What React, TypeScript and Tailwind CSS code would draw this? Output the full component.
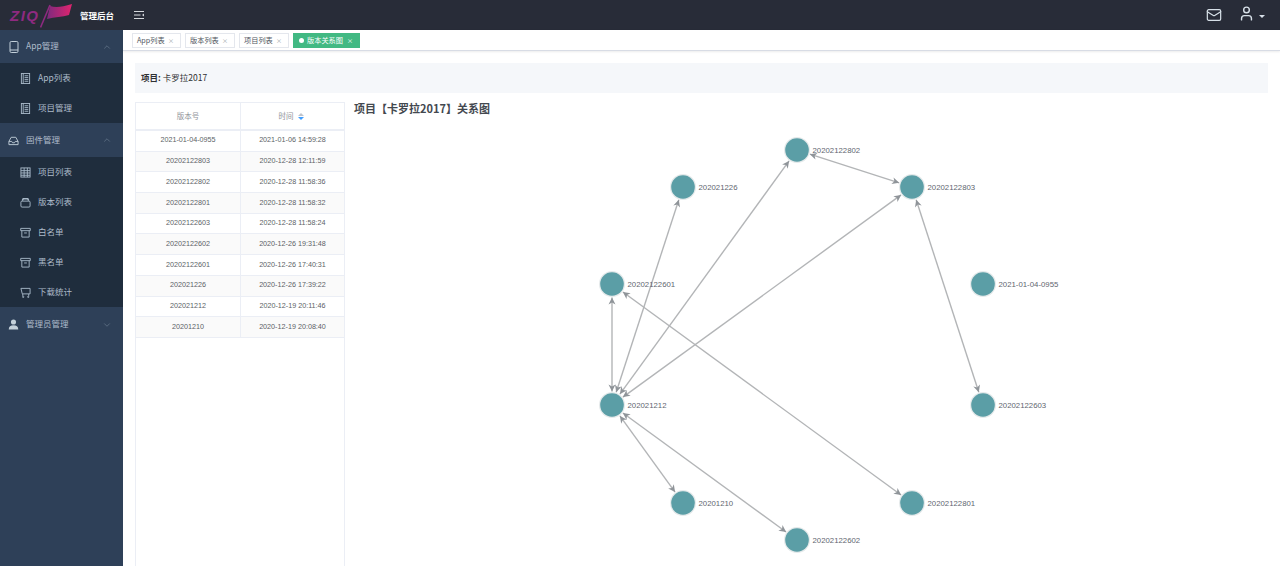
import React from 'react';
import { ChevronDown, ChevronUp, Mail, User } from 'lucide-react';

const cjk = { fontFamily: '"Noto Sans CJK SC", "Liberation Sans", sans-serif' };

const rows = [
  ['2021-01-04-0955', '2021-01-06 14:59:28'],
  ['20202122803', '2020-12-28 12:11:59'],
  ['20202122802', '2020-12-28 11:58:36'],
  ['20202122801', '2020-12-28 11:58:32'],
  ['20202122603', '2020-12-28 11:58:24'],
  ['20202122602', '2020-12-26 19:31:48'],
  ['20202122601', '2020-12-26 17:40:31'],
  ['202021226', '2020-12-26 17:39:22'],
  ['202021212', '2020-12-19 20:11:46'],
  ['20201210', '2020-12-19 20:08:40'],
];

// node positions in page coordinates, the svg starts at (345, 125)
const nodes: Record<string, [number, number]> = {
  '20202122802': [797, 150],
  '202021226': [683, 187],
  '20202122803': [912, 187],
  '20202122601': [612, 284],
  '2021-01-04-0955': [983, 284],
  '202021212': [612, 405],
  '20202122603': [983, 405],
  '20201210': [683, 503],
  '20202122801': [912, 503],
  '20202122602': [797, 540],
};

const edges: [string, string][] = [
  ['202021212', '20202122601'],
  ['202021212', '202021226'],
  ['202021212', '20202122802'],
  ['202021212', '20202122803'],
  ['20202122601', '20202122801'],
  ['20201210', '202021212'],
  ['20202122602', '202021212'],
  ['20202122802', '20202122803'],
  ['20202122803', '20202122603'],
];

const Arrow = ({ x, y, angle }: { x: number; y: number; angle: number }) => (
  <path
    d="M-7 -3.5 L0 0 L-7 3.5 L-5 0 Z"
    fill="#8f9499"
    transform={`translate(${x} ${y}) rotate(${angle})`}
  />
);

const Graph = () => (
  <svg className="absolute left-0 top-0" width="935" height="441" viewBox="345 125 935 441">
    {edges.map(([a, b]) => {
      const [x1, y1] = nodes[a];
      const [x2, y2] = nodes[b];
      const len = Math.hypot(x2 - x1, y2 - y1);
      const ux = (x2 - x1) / len;
      const uy = (y2 - y1) / len;
      const r = 13.5;
      const angle = (Math.atan2(uy, ux) * 180) / Math.PI;
      return (
        <g key={a + b}>
          <line x1={x1 + ux * r} y1={y1 + uy * r} x2={x2 - ux * r} y2={y2 - uy * r} stroke="#b3b5b7" strokeWidth="1.4" />
          <Arrow x={x2 - ux * r} y={y2 - uy * r} angle={angle} />
          <Arrow x={x1 + ux * r} y={y1 + uy * r} angle={angle + 180} />
        </g>
      );
    })}
    {Object.entries(nodes).map(([name, [x, y]]) => (
      <g key={name}>
        <circle cx={x} cy={y} r="13" fill="#e4e9ea" />
        <circle cx={x} cy={y} r="11.8" fill="#5b9ea6" />
        <text x={x + 15.5} y={y + 2.7} fontSize="7.8" fill="#5f6670" fontFamily="Liberation Sans, sans-serif">
          {name}
        </text>
      </g>
    ))}
  </svg>
);

// small sidebar glyphs, the icon packages have nothing this close
const Ic = ({ size = 11, children }: { size?: number; children: React.ReactNode }) => (
  <svg width={size} height={size} viewBox="0 0 12 12" fill="none" stroke="currentColor" strokeWidth="1">
    {children}
  </svg>
);

const PhoneIcon = () => (
  <Ic size={12}>
    <rect x="2" y="0.5" width="8" height="11" rx="1.2" />
    <path d="M2 9h8" />
  </Ic>
);
const BookIcon = () => (
  <Ic>
    <rect x="1.5" y="0.5" width="9" height="11" />
    <path d="M3.5 0.5v11M5 3h4M5 5h4M5 7h4M5 9h4" />
  </Ic>
);
const GridIcon = () => (
  <Ic>
    <rect x="1" y="1" width="10" height="10" />
    <path d="M1 4h10M1 6.5h10M1 9h10M4.5 1v10M8 1v10" />
  </Ic>
);
const BoxIcon = () => (
  <Ic>
    <rect x="1" y="4.5" width="10" height="6.5" rx="1.2" />
    <path d="M2.5 4L3.5 2h5l1 2" strokeWidth="1.6" />
  </Ic>
);
const ArchiveIcon = () => (
  <Ic>
    <path d="M0.8 1.5h10.4M0.8 4h10.4" />
    <path d="M0.8 1.5v2.5M11.2 1.5v2.5M2 4v7h8V4M4.5 6.5h3" />
  </Ic>
);
const CartIcon = () => (
  <Ic>
    <path d="M1 1.5h10v6H2.5zM3 7.5v2.2M9.5 7.5v2.2" />
    <circle cx="3.5" cy="10.8" r="0.7" />
    <circle cx="9" cy="10.8" r="0.7" />
  </Ic>
);
const FirmwareIcon = () => (
  <Ic size={11}>
    <path d="M1 7l2.5-4.5h5L11 7v3.5H1zM1 7h3l1 1.5h2L8 7h3" />
  </Ic>
);
const AdminIcon = () => (
  <svg width="11" height="11" viewBox="0 0 12 12" fill="currentColor">
    <circle cx="6" cy="3.3" r="2.8" />
    <path d="M0.8 11.5c0-3.2 2-4.6 5.2-4.6s5.2 1.4 5.2 4.6z" />
  </svg>
);

const MenuHead = ({ icon, label, open, h }: { icon: React.ReactNode; label: string; open: boolean; h: string }) => (
  <div className={`flex items-center pl-[8px] pr-[11px] text-[8.5px] text-[#aebccb] ${h}`}>
    <span className="flex w-[18px] text-[#c3d0da]">{icon}</span>
    <span className="-mt-[2px]">{label}</span>
    <span className="ml-auto text-[#5f7186]">
      {open ? <ChevronUp size={10} /> : <ChevronDown size={10} />}
    </span>
  </div>
);

const MenuItem = ({ icon, label }: { icon: React.ReactNode; label: string }) => (
  <div className="flex h-[30px] items-center pl-[20px] text-[8.5px] text-[#aebccb]">
    <span className="flex w-[18px] text-[#a9bac9]">{icon}</span>
    <span className="-mt-[2px]">{label}</span>
  </div>
);

const Tab = ({ label, w }: { label: string; w: string }) => (
  <div className={`flex h-[15px] items-center justify-between whitespace-nowrap border border-[#e4e7ed] bg-white pl-[4px] pr-[6px] text-[7.2px] text-[#50565e] ${w}`}>
    <span>{label}</span>
    <span className="text-[6px] text-[#9aa0a6]">×</span>
  </div>
);

export default function App() {
  return (
    <div className="flex h-[566px] w-[1280px] flex-col overflow-hidden bg-white" style={cjk}>
      {/* Top bar */}
      <header className="flex h-[30px] shrink-0 items-center bg-[#282c38]">
        <div className="flex w-[123px] items-center pl-[10px]">
          <span
            className="w-[31px] whitespace-nowrap text-[15px] font-bold italic leading-none tracking-[1.5px] text-[#8e2a80]"
            style={{ fontFamily: '"Liberation Sans", sans-serif' }}
          >
            ZIQ
          </span>
          <svg width="32" height="24" viewBox="0 0 32 24" className="-ml-[1px] mt-[2px] shrink-0">
            <defs>
              <linearGradient id="flag" x1="0" x2="1">
                <stop offset="0" stopColor="#7d2a7e" />
                <stop offset="1" stopColor="#e0246e" />
              </linearGradient>
            </defs>
            <path d="M0.5 23.5 L10 1" stroke="#8e2a80" strokeWidth="1.6" />
            <path d="M10 2 C16 4 22 3 32 0 L29 11 C22 13 15 13 7 15 Z" fill="url(#flag)" />
          </svg>
          <span className="ml-[8px] whitespace-nowrap text-[8.5px] font-bold text-white">管理后台</span>
        </div>
        <svg width="10" height="10" viewBox="0 0 10 10" className="ml-[11px] text-[#d5d8dc]" fill="none" stroke="currentColor" strokeWidth="1">
          <path d="M0 1.5h10M0 5h6.5M0 8.5h10" />
          <path d="M10 3.6v2.8L8 5z" fill="currentColor" stroke="none" />
        </svg>
        <div className="ml-auto flex items-center pr-[15px] text-[#d7e0e8]">
          <Mail size={16} strokeWidth={1.8} />
          <User size={17} className="ml-[16px] -mt-[4px]" />
          <span className="ml-[4px] mt-[2px] h-0 w-0 border-x-[3px] border-t-[3px] border-x-transparent border-t-[#d7e0e8]" />
        </div>
      </header>

      <div className="flex min-h-0 flex-1">
        {/* Sidebar */}
        <aside className="w-[123px] shrink-0 bg-[#2e4058]">
          <MenuHead icon={<PhoneIcon />} label="App管理" open h="h-[33px]" />
          <div className="bg-[#1f2d3d]">
            <MenuItem icon={<BookIcon />} label="App列表" />
            <MenuItem icon={<BookIcon />} label="项目管理" />
          </div>
          <MenuHead icon={<FirmwareIcon />} label="固件管理" open h="h-[34px]" />
          <div className="bg-[#1f2d3d]">
            <MenuItem icon={<GridIcon />} label="项目列表" />
            <MenuItem icon={<BoxIcon />} label="版本列表" />
            <MenuItem icon={<ArchiveIcon />} label="白名单" />
            <MenuItem icon={<ArchiveIcon />} label="黑名单" />
            <MenuItem icon={<CartIcon />} label="下载统计" />
          </div>
          <MenuHead icon={<AdminIcon />} label="管理员管理" open={false} h="h-[35px]" />
        </aside>

        {/* Main */}
        <main className="flex min-w-0 flex-1 flex-col">
          <div className="flex h-[21px] shrink-0 items-center gap-[4px] border-b border-[#d8dce5] pl-[9px] shadow-[0_1px_2px_rgba(0,0,0,0.08)]">
            <Tab label="App列表" w="w-[49px]" />
            <Tab label="版本列表" w="w-[50px]" />
            <Tab label="项目列表" w="w-[50px]" />
            <div className="flex h-[15px] w-[67px] items-center whitespace-nowrap bg-[#42b983] pl-[6px] text-[7.2px] text-white">
              <span className="mr-[3px] h-[5px] w-[5px] rounded-full bg-white" />
              <span>版本关系图</span>
              <span className="ml-[4px] text-[6px]">×</span>
            </div>
          </div>

          <div className="flex min-h-0 flex-1 flex-col px-[12px] pt-[12px]">
            <div className="flex h-[30px] shrink-0 items-center bg-[#f5f7fa] pb-[2px] pl-[6px] text-[8.5px] text-[#303133]">
              <span className="font-bold">项目:</span>
              <span className="ml-[2px]">卡罗拉2017</span>
            </div>

            <div className="mt-[9px] flex min-h-0 flex-1">
              {/* Version table */}
              <div className="w-[210px] shrink-0 border-x border-t border-[#ebeef5] text-[7.2px] text-[#5c5f66]">
                <div className="flex h-[28px] border-b-2 border-[#ebeef5] text-[7.5px] text-[#909399]">
                  <div className="flex w-[105px] items-center justify-center border-r border-[#ebeef5]">版本号</div>
                  <div className="flex flex-1 items-center justify-center pr-[3px]">
                    时间
                    <span className="ml-[4px] flex flex-col gap-[1px]">
                      <span className="h-0 w-0 border-x-[3px] border-b-[3px] border-x-transparent border-b-[#c0c4cc]" />
                      <span className="h-0 w-0 border-x-[3px] border-t-[3px] border-x-transparent border-t-[#409eff]" />
                    </span>
                  </div>
                </div>
                {rows.map(([version, time], i) => (
                  <div
                    key={version}
                    className={`flex h-[20.7px] border-b border-[#ebeef5] ${i % 2 === 1 ? 'bg-[#fafafa]' : 'bg-white'}`}
                    style={{ fontFamily: '"Liberation Sans", sans-serif' }}
                  >
                    <div className="flex w-[105px] items-center justify-center border-r border-[#ebeef5]">{version}</div>
                    <div className="flex flex-1 items-center justify-center">{time}</div>
                  </div>
                ))}
              </div>

              {/* Relation graph */}
              <div className="relative min-w-0 flex-1">
                <h2 className="pl-[9px] text-[11px] font-bold leading-[13px] text-[#43484f]">项目【卡罗拉2017】关系图</h2>
                <div className="absolute left-0 top-[23px]">
                  <Graph />
                </div>
              </div>
            </div>
          </div>
        </main>
      </div>
    </div>
  );
}
